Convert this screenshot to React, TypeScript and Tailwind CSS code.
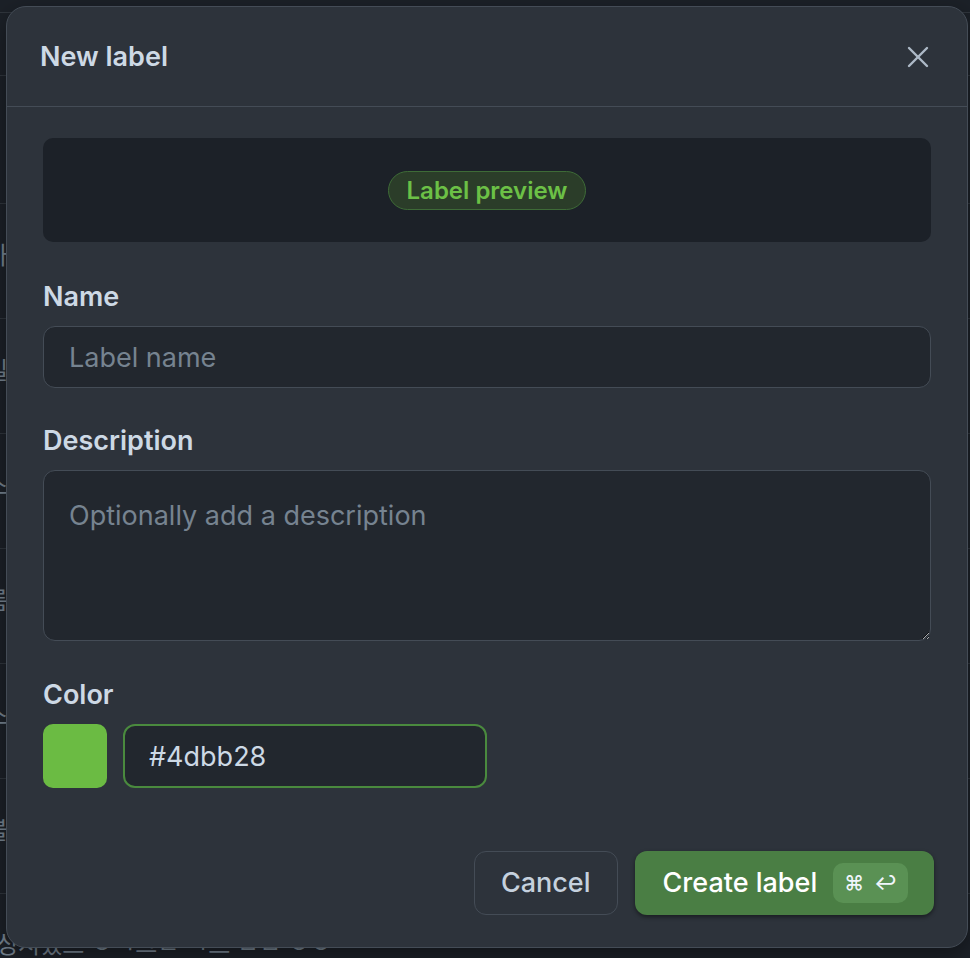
import React from 'react';
import { X } from 'lucide-react';

const rows = ['가', '일', '스', '름', '스', '블'];

export default function App() {
  return (
    <div
      className="relative h-[958px] w-[970px] overflow-hidden bg-[#1c2128]"
      style={{ fontFamily: 'Inter, "Noto Sans CJK KR", sans-serif' }}
    >
      {/* page behind the dialog */}
      <div className="flex flex-col pt-[12px]">
        <div className="h-[63px] border-t border-[#30363d]" />
        <div className="h-[128px] border-t border-[#30363d]" />
        {rows.map((r, i) => (
          <div key={i} className="h-[115px] border-t border-[#30363d] pt-[37px] text-[24px] leading-[30px] text-[#768390]">
            <span className="ml-[-14px]">{r}</span>
          </div>
        ))}
        <div className="ml-[-4px] border-t border-[#30363d] pt-[36px] text-[24px] leading-[30px] text-[#768390]">
          싱지었드 ㅇㅋ그ㄴ ㄱ므 ㅂㅂ ㅇㅇ
        </div>
      </div>

      {/* dialog */}
      <div className="absolute left-[6px] top-[6px] flex h-[942px] w-[962px] flex-col rounded-[20px] border border-[#444c56] bg-[#2d333b] shadow-[0_8px_24px_rgba(0,0,0,0.4)]">
        <div className="flex h-[100px] shrink-0 items-center justify-between border-b border-[#444c56] pl-[33px] pr-[31px]">
          <h1 className="text-[27px] font-semibold leading-[34px] text-[#cdd9e5]">New label</h1>
          <X className="h-[36px] w-[36px] text-[#adbac7]" strokeWidth={1.6} />
        </div>

        <div className="flex flex-1 flex-col px-[36px] pt-[31px]">
          <div className="flex h-[104px] items-center justify-center rounded-[10px] bg-[#1c2128]">
            <span className="rounded-full border border-[#3e6b37] bg-[#2b3d29] px-[18px] py-[4px] text-[24px] font-semibold leading-[29px] text-[#6cc046]">
              Label preview
            </span>
          </div>

          <label className="mt-[40px] text-[27px] font-semibold leading-[30px] text-[#cdd9e5]">Name</label>
          <input
            placeholder="Label name"
            className="mt-[14px] h-[62px] rounded-[12px] border border-[#444c56] bg-[#22272e] px-[25px] text-[27px] text-[#cdd9e5] outline-none placeholder:text-[#768390]"
          />

          <label className="mt-[38px] text-[27px] font-semibold leading-[30px] text-[#cdd9e5]">Description</label>
          <textarea
            placeholder="Optionally add a description"
            className="mt-[14px] h-[171px] resize-y rounded-[12px] border border-[#444c56] bg-[#22272e] px-[25px] py-[27px] text-[27px] leading-[36px] text-[#cdd9e5] outline-none placeholder:text-[#768390]"
          />

          <label className="mt-[39px] text-[27px] font-semibold leading-[30px] text-[#cdd9e5]">Color</label>
          <div className="mt-[14px] flex gap-[16px]">
            <div className="h-[64px] w-[64px] rounded-[10px] bg-[#6bbb43]" />
            <input
              readOnly
              value="#4dbb28"
              className="h-[64px] w-[364px] rounded-[12px] border-2 border-[#4a8a3e] bg-[#22272e] px-[24px] text-[27px] text-[#cdd9e5] outline-none"
            />
          </div>

          <div className="mt-auto flex justify-end gap-[17px] pb-[32px]">
            <button className="h-[64px] rounded-[12px] border border-[#444c56] bg-[#2d333b] px-[26px] text-[27px] font-medium text-[#c5d1de]">
              Cancel
            </button>
            <button className="mr-[-3px] flex h-[64px] items-center gap-[16px] rounded-[12px] bg-[#4a7e44] pl-[28px] pr-[26px] text-[27px] font-medium text-white shadow-[0_2px_4px_rgba(0,0,0,0.45)]">
              Create label
              <span className="flex h-[40px] items-center gap-[10px] rounded-[10px] bg-[#5a9154] px-[11px] text-[20px] leading-none text-[#f0f6fc]">
                <span>⌘</span>
                <span>↩</span>
              </span>
            </button>
          </div>
        </div>
      </div>
    </div>
  );
}
